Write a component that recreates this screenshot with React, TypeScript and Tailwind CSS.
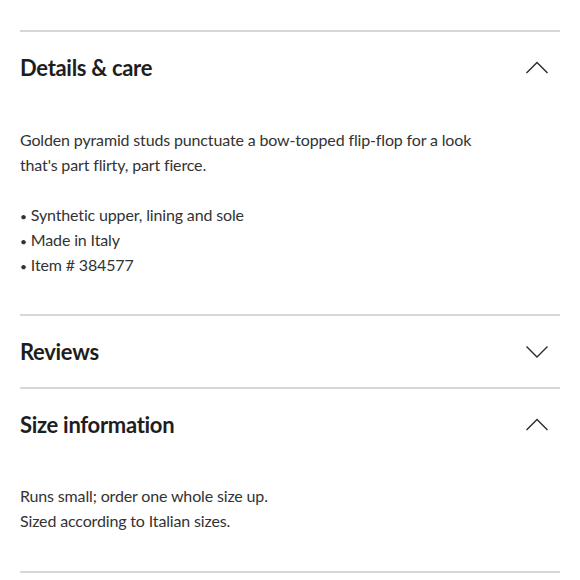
import React from "react";

function Chevron({ up }: { up: boolean }) {
  return (
    <svg width="24" height="13" viewBox="0 0 24 13" fill="none" className="mr-[11px]">
      <polyline
        points={up ? "1.5,12 12,1.5 22.5,12" : "1.5,1.5 12,12 22.5,1.5"}
        stroke="#2a2a2a"
        strokeWidth="1.4"
        strokeLinejoin="miter"
      />
    </svg>
  );
}

function Section({
  title,
  open,
  children,
  contentClass = "",
}: {
  title: string;
  open: boolean;
  children?: React.ReactNode;
  contentClass?: string;
}) {
  return (
    <div className="border-t-2 border-[#d3d8da]">
      <div className="h-[71px] flex items-center justify-between">
        <h2 className="text-[22px] font-bold text-[#1e1e1e] tracking-[-0.3px]">{title}</h2>
        <Chevron up={open} />
      </div>
      {open && <div className={contentClass}>{children}</div>}
    </div>
  );
}

function Bullet({ children }: { children: React.ReactNode }) {
  return (
    <li>
      <span className="text-[12px] leading-[0] mr-[4px]">•</span>
      {children}
    </li>
  );
}

export default function App() {
  return (
    <div
      className="bg-white w-[580px] h-[580px] px-5 pt-[30px] text-[16px] leading-[25px] tracking-[-0.15px] text-[#333333]"
      style={{ fontFamily: "Lato, 'Open Sans', sans-serif" }}
    >
      <Section title="Details & care" open contentClass="pt-6 pb-[37px]">
        <p>
          Golden pyramid studs punctuate a bow-topped flip-flop for a look
          <br />
          that's part flirty, part fierce.
        </p>
        <ul className="mt-[25px]">
          <Bullet>Synthetic upper, lining and sole</Bullet>
          <Bullet>Made in Italy</Bullet>
          <Bullet>Item # 384577</Bullet>
        </ul>
      </Section>
      <Section title="Reviews" open={false} />
      <Section title="Size information" open contentClass="pt-[23px] pb-[38px]">
        <p>Runs small; order one whole size up.</p>
        <p>Sized according to Italian sizes.</p>
      </Section>
      <div className="border-t-2 border-[#d3d8da]" />
    </div>
  );
}
